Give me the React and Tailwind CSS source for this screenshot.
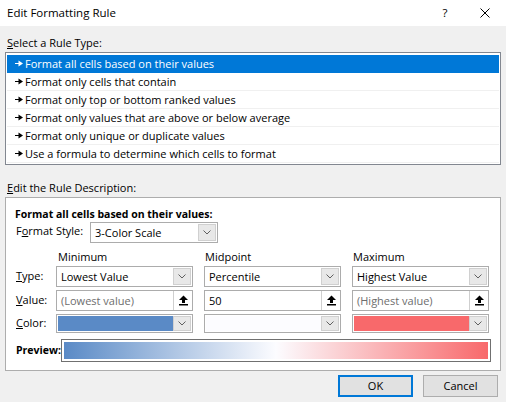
import React from 'react'

const font = { fontFamily: '"Open Sans", "Noto Sans", Arial, sans-serif' }

function ItemArrow({ white }) {
  const c = white ? '#ffffff' : '#000000'
  return (
    <svg width="8" height="7" viewBox="0 0 8 7" className="shrink-0">
      <rect x="0" y="3" width="4" height="1" fill={c} />
      <polygon points="3.5,0.5 8,3.5 3.5,6.5" fill={c} />
    </svg>
  )
}

function Chevron() {
  return (
    <svg width="8" height="5" viewBox="0 0 8 5">
      <polyline points="0.5,0.5 4,4 7.5,0.5" fill="none" stroke="#606060" strokeWidth="1" />
    </svg>
  )
}

function UpIcon() {
  return (
    <svg width="9" height="11" viewBox="0 0 9 11">
      <polygon points="0,5 4.5,0.5 9,5" fill="#000" />
      <rect x="3" y="5" width="3" height="3" fill="#000" />
      <rect x="0" y="9" width="9" height="1.5" fill="#000" />
    </svg>
  )
}

function DropBtn() {
  return (
    <div className="w-[18px] h-full flex items-center justify-center bg-[#e8e8e8] border border-[#d0d0d0]">
      <Chevron />
    </div>
  )
}

function Combo({ text, w = 'w-[137px]' }) {
  return (
    <div className={`${w} h-full flex items-center border border-[#acacac] bg-white p-[1px] shrink-0`}>
      <span className="flex-1 pl-[3px] leading-none">{text}</span>
      <DropBtn />
    </div>
  )
}

function ValueBox({ text, gray }) {
  return (
    <div className="w-[137px] h-full flex items-center border border-[#acacac] bg-white shrink-0">
      <span className={`flex-1 pl-[4px] leading-none ${gray ? 'text-[#6d6d6d]' : 'text-black'}`}>{text}</span>
      <div className="w-[19px] h-full flex items-center justify-center border-l border-[#cfcfcf] bg-white">
        <UpIcon />
      </div>
    </div>
  )
}

function ColorBox({ color }) {
  return (
    <div className="w-[137px] h-full flex items-center border border-[#acacac] bg-white p-[1px] shrink-0">
      <div className="flex-1 h-full" style={{ background: color }} />
      <DropBtn />
    </div>
  )
}

const rules = [
  'Format all cells based on their values',
  'Format only cells that contain',
  'Format only top or bottom ranked values',
  'Format only values that are above or below average',
  'Format only unique or duplicate values',
  'Use a formula to determine which cells to format',
]

export default function App() {
  return (
    <div className="w-[506px] h-[402px] bg-[#f0f0f0] text-[11px] text-black flex flex-col overflow-hidden" style={font}>
      <div className="h-[26px] bg-white flex items-center shrink-0 text-[11.5px]">
        <div className="pl-[7px] flex-1">Edit Formatting Rule</div>
        <div className="w-[20px] text-center mr-[25px]">?</div>
        <svg width="10" height="10" viewBox="0 0 10 10" className="mr-[16px]">
          <path d="M0.5 0.5 L9.5 9.5 M9.5 0.5 L0.5 9.5" stroke="#000" strokeWidth="1" />
        </svg>
      </div>

      <div className="pl-[7px] mt-[9px] h-[16px] leading-[16px]">
        <span className="underline">S</span>elect a Rule Type:
      </div>
      <div className="ml-[5px] mt-[1px] w-[496px] h-[113px] border border-[#828790] bg-white pt-[2px] px-[1px]">
        {rules.map((r, i) => (
          <div
            key={r}
            className={`h-[18px] flex items-center gap-[2px] pl-[8px] border-b ${
              i === 0 ? 'bg-[#0078d7] text-white border-[#0078d7]' : 'border-[#f0f0f0]'
            }`}
          >
            <ItemArrow white={i === 0} />
            <span className="leading-none">{r}</span>
          </div>
        ))}
      </div>

      <div className="pl-[7px] mt-[15px] h-[16px] leading-[16px]">
        <span className="underline">E</span>dit the Rule Description:
      </div>
      <div className="ml-[5px] mt-[1px] w-[496px] h-[174px] border border-[#adadad] bg-white pl-[9px] pt-[8px] flex flex-col">
        <div className="font-bold h-[16px] leading-[16px] text-[10.5px]">Format all cells based on their values:</div>
        <div className="flex items-center h-[21px]">
          <div className="w-[75px] pl-[1px] -mt-[3px] whitespace-nowrap">
            F<span className="underline">o</span>rmat Style:
          </div>
          <Combo text="3-Color Scale" w="w-[128px]" />
        </div>

        <div className="flex mt-[6px] h-[16px] leading-[16px] pl-[41px] gap-[11px]">
          <div className="w-[137px] pl-[2px]">Minimum</div>
          <div className="w-[137px] pl-[1px]">Midpoint</div>
          <div className="w-[137px] pl-[1px]">Maximum</div>
        </div>

        <div className="flex items-center mt-[1px] h-[21px] gap-[11px]">
          <div className="w-[30px] pl-[1px]">
            <span className="underline">T</span>ype:
          </div>
          <Combo text="Lowest Value" />
          <Combo text="Percentile" />
          <Combo text="Highest Value" />
        </div>

        <div className="flex items-center mt-[3px] h-[21px] gap-[11px]">
          <div className="w-[30px] pl-[1px]">
            <span className="underline">V</span>alue:
          </div>
          <ValueBox text="(Lowest value)" gray />
          <ValueBox text="50" />
          <ValueBox text="(Highest value)" gray />
        </div>

        <div className="flex items-center mt-[3px] h-[19px] gap-[11px]">
          <div className="w-[30px] pl-[1px]">
            <span className="underline">C</span>olor:
          </div>
          <ColorBox color="#5a8ac6" />
          <ColorBox color="#fcfcff" />
          <ColorBox color="#f8696b" />
        </div>

        <div className="flex items-center mt-[6px] h-[23px]">
          <div className="w-[46px] pl-[1px] font-bold whitespace-nowrap shrink-0 text-[10.5px]">Preview:</div>
          <div className="w-[430px] h-full border border-[#707070] bg-white p-[2px] shrink-0">
            <div className="w-full h-full bg-[linear-gradient(to_right,#5a8ac6,#fcfcff_50%,#f8696b)]" />
          </div>
        </div>
      </div>

      <div className="flex justify-end gap-[10px] mt-[4px] mr-[8px]">
        <button className="w-[75px] h-[22px] bg-[#e1e1e1] border-2 border-[#0078d7]">OK</button>
        <button className="w-[75px] h-[22px] bg-[#e1e1e1] border border-[#adadad]">Cancel</button>
      </div>
    </div>
  )
}
